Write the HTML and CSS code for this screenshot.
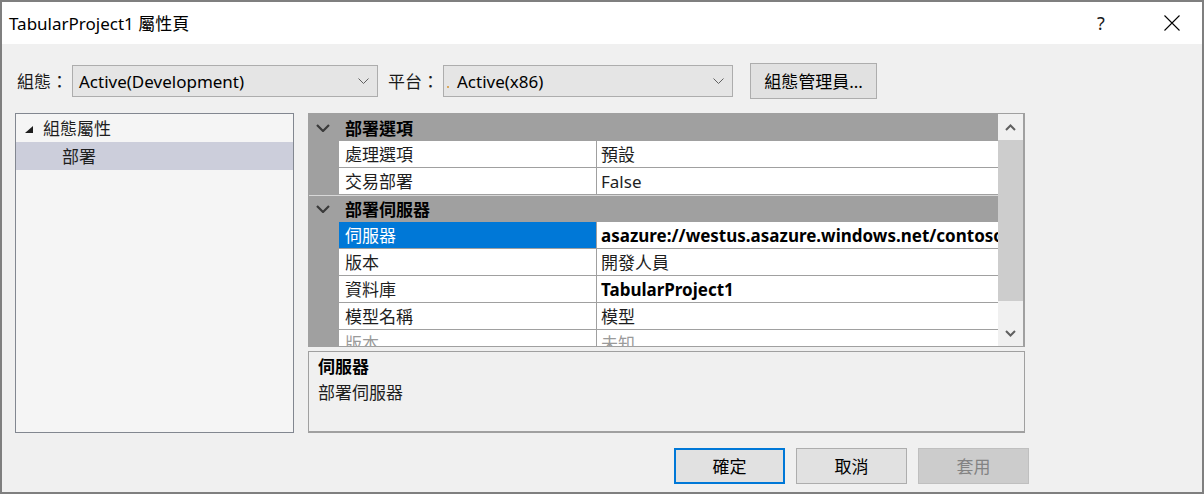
FILE: index.html
```html
<!DOCTYPE html>
<html lang="zh-Hant">
<head>
<meta charset="utf-8">
<title>TabularProject1 屬性頁</title>
<link rel="stylesheet" href="styles.css">
</head>
<body>
<div class="window">
  <div class="titlebar">
    <div class="title">TabularProject1 屬性頁</div>
    <div class="tb-btn help">?</div>
    <div class="tb-btn close">
      <svg width="16" height="16" viewBox="0 0 16 16"><path d="M0.5 0.5 L15.5 15.5 M15.5 0.5 L0.5 15.5" stroke="#000" stroke-width="1.1" fill="none"/></svg>
    </div>
  </div>
  <div class="content">
    <div class="toolbar">
      <span class="label">組態：</span>
      <div class="combo combo-config">
        <span class="combo-text">Active(Development)</span>
        <svg class="chev" width="11" height="6" viewBox="0 0 11 6"><polyline points="0.5,0.5 5.5,5.5 10.5,0.5" stroke="#606060" stroke-width="1" fill="none"/></svg>
      </div>
      <span class="label label-platform">平台：</span>
      <div class="combo combo-platform">
        <span class="dot"></span>
        <span class="combo-text">Active(x86)</span>
        <svg class="chev" width="11" height="6" viewBox="0 0 11 6"><polyline points="0.5,0.5 5.5,5.5 10.5,0.5" stroke="#606060" stroke-width="1" fill="none"/></svg>
      </div>
      <button class="btn btn-manager">組態管理員...</button>
    </div>
    <div class="main">
      <div class="tree">
        <div class="tree-item">
          <svg class="tri" width="8" height="7" viewBox="0 0 8 7"><polygon points="8,0 8,7 0,7" fill="#1e1e1e"/></svg>
          <span>組態屬性</span>
        </div>
        <div class="tree-item child selected"><span>部署</span></div>
      </div>
      <div class="right">
        <div class="grid">
          <div class="rows">
            <div class="cat">
              <svg class="cat-chev" width="14" height="8" viewBox="0 0 14 8"><polyline points="1,1 7,7 13,1" stroke="#3a3a3a" stroke-width="2.2" fill="none"/></svg>
              <span>部署選項</span>
            </div>
            <div class="prop"><div class="name">處理選項</div><div class="value">預設</div></div>
            <div class="prop"><div class="name">交易部署</div><div class="value">False</div></div>
            <div class="cat cat-next">
              <svg class="cat-chev" width="14" height="8" viewBox="0 0 14 8"><polyline points="1,1 7,7 13,1" stroke="#3a3a3a" stroke-width="2.2" fill="none"/></svg>
              <span>部署伺服器</span>
            </div>
            <div class="prop selected"><div class="name">伺服器</div><div class="value bold">asazure://westus.asazure.windows.net/contoso</div></div>
            <div class="prop"><div class="name">版本</div><div class="value">開發人員</div></div>
            <div class="prop"><div class="name">資料庫</div><div class="value bold">TabularProject1</div></div>
            <div class="prop"><div class="name">模型名稱</div><div class="value">模型</div></div>
            <div class="prop readonly"><div class="name">版本</div><div class="value">未知</div></div>
          </div>
          <div class="scrollbar">
            <div class="sb-btn">
              <svg width="11" height="7" viewBox="0 0 11 7"><polyline points="1,6 5.5,1.5 10,6" stroke="#606060" stroke-width="2" fill="none"/></svg>
            </div>
            <div class="sb-track"><div class="sb-thumb"></div></div>
            <div class="sb-btn">
              <svg width="11" height="7" viewBox="0 0 11 7"><polyline points="1,1 5.5,5.5 10,1" stroke="#606060" stroke-width="2" fill="none"/></svg>
            </div>
          </div>
        </div>
        <div class="desc">
          <div class="desc-title">伺服器</div>
          <div class="desc-text">部署伺服器</div>
        </div>
      </div>
    </div>
    <div class="buttons">
      <button class="btn btn-dlg btn-default">確定</button>
      <button class="btn btn-dlg">取消</button>
      <button class="btn btn-dlg btn-disabled">套用</button>
    </div>
  </div>
</div>
</body>
</html>
```

FILE: styles.css
```css
* { box-sizing: border-box; }

html, body {
  margin: 0;
  padding: 0;
}

body {
  width: 1204px;
  height: 494px;
  overflow: hidden;
  font-family: "Noto Sans", "Noto Sans CJK TC", sans-serif;
  font-size: 17px;
  color: #000;
  background: #f0f0f0;
}

.window {
  width: 1204px;
  height: 494px;
  border: 2px solid #7f7f7f;
  display: flex;
  flex-direction: column;
  background: #f0f0f0;
}

/* title bar */
.titlebar {
  height: 42px;
  flex: none;
  background: #fff;
  display: flex;
  align-items: center;
}

.title {
  flex: 1;
  padding-left: 7px;
  padding-top: 1px;
  line-height: 20px;
  white-space: nowrap;
}

.tb-btn {
  height: 42px;
  display: flex;
  align-items: center;
  justify-content: center;
}

.help {
  width: 82px;
  font-size: 18px;
  color: #1a1a1a;
}

.close {
  width: 60px;
}

/* content */
.content {
  flex: 1;
  display: flex;
  flex-direction: column;
  padding: 19px 0 0 13px;
}

.toolbar {
  height: 36px;
  display: flex;
  align-items: center;
  padding-left: 2px;
}

.label {
  width: 51px;
  line-height: 20px;
  padding-top: 2px;
  white-space: nowrap;
  color: #1a1a1a;
}

.label-platform {
  margin-left: 10px;
}

.combo {
  height: 32px;
  margin-left: 4px;
  background: #e5e5e5;
  border: 1px solid #adadad;
  display: flex;
  align-items: center;
  padding-left: 6px;
  padding-right: 8px;
}

.combo-config { width: 306px; }
.combo-platform { width: 290px; padding-left: 3px; }

.combo-text {
  flex: 1;
  line-height: 20px;
  padding-top: 2px;
  white-space: nowrap;
}

.dot {
  width: 2px;
  height: 2px;
  margin-top: 12px;
  margin-right: 8px;
  background: #d9a860;
  flex: none;
}

.chev { flex: none; }

.btn {
  font-family: inherit;
  font-size: 17px;
  color: #000;
  background: #e1e1e1;
  border: 1px solid #adadad;
  padding: 1px 0 0;
  margin: 0;
  line-height: 20px;
}

.btn-manager {
  width: 127px;
  height: 36px;
  margin-left: 17px;
}

/* main */
.main {
  margin-top: 14px;
  display: flex;
  height: 320px;
}

.tree {
  width: 279px;
  height: 320px;
  background: #f5f5f5;
  border: 1px solid #828790;
}

.tree-item {
  height: 28px;
  display: flex;
  align-items: center;
  padding-left: 9px;
  padding-top: 2px;
  line-height: 20px;
  color: #1e1e1e;
}

.tree-item .tri {
  margin-right: 10px;
  margin-top: 0;
}

.tree-item.child {
  padding-left: 46px;
}

.tree-item.selected {
  background: #cccedb;
}

.right {
  margin-left: 14px;
  width: 717px;
  display: flex;
  flex-direction: column;
}

.grid {
  height: 234px;
  border: 1px solid #a0a0a0;
  display: flex;
  background: #a0a0a0;
}

.rows {
  width: 689px;
  height: 232px;
  overflow: hidden;
  background: #a0a0a0;
}

.cat {
  height: 27px;
  display: flex;
  align-items: center;
  font-weight: bold;
  line-height: 20px;
}

.cat span {
  padding-top: 2px;
}

.cat-next {
  border-top: 1px solid #d8d8d8;
}

.cat-chev {
  margin-left: 7px;
  margin-right: 15px;
}

.prop {
  height: 27px;
  margin-left: 30px;
  display: flex;
  background: #fff;
  border-bottom: 1px solid #a0a0a0;
}

.name {
  width: 258px;
  flex: none;
  padding-left: 6px;
  padding-top: 2px;
  border-right: 1px solid #a0a0a0;
  line-height: 24px;
  white-space: nowrap;
  color: #1e1e1e;
}

.value {
  flex: 1;
  padding-left: 4px;
  padding-top: 2px;
  line-height: 24px;
  white-space: nowrap;
  overflow: hidden;
  color: #1e1e1e;
}

.value.bold {
  font-weight: bold;
  color: #000;
}

.prop.selected .name {
  background: #0078d7;
  color: #fff;
}

.prop.readonly .name,
.prop.readonly .value {
  color: #9a9a9a;
}

.scrollbar {
  width: 25px;
  height: 232px;
  background: #f0f0f0;
  display: flex;
  flex-direction: column;
}

.sb-btn {
  height: 26px;
  flex: none;
  display: flex;
  align-items: center;
  justify-content: center;
}

.sb-track {
  flex: 1;
  display: flex;
  flex-direction: column;
}

.sb-thumb {
  height: 161px;
  background: #cdcdcd;
}

.desc {
  margin-top: 4px;
  height: 82px;
  border: 1px solid #a0a0a0;
  border-bottom-width: 2px;
  background: #f0f0f0;
  padding: 2px 9px 0;
}

.desc-title {
  font-weight: bold;
  line-height: 26px;
}

.desc-text {
  line-height: 26px;
  color: #1e1e1e;
}

/* dialog buttons */
.buttons {
  margin-top: 15px;
  width: 1014px;
  display: flex;
  justify-content: flex-end;
  gap: 11px;
}

.btn-dlg {
  width: 111px;
  height: 36px;
}

.btn-default {
  border: 2px solid #0078d7;
}

.btn-disabled {
  background: #cccccc;
  border-color: #bfbfbf;
  color: #838383;
}
```
